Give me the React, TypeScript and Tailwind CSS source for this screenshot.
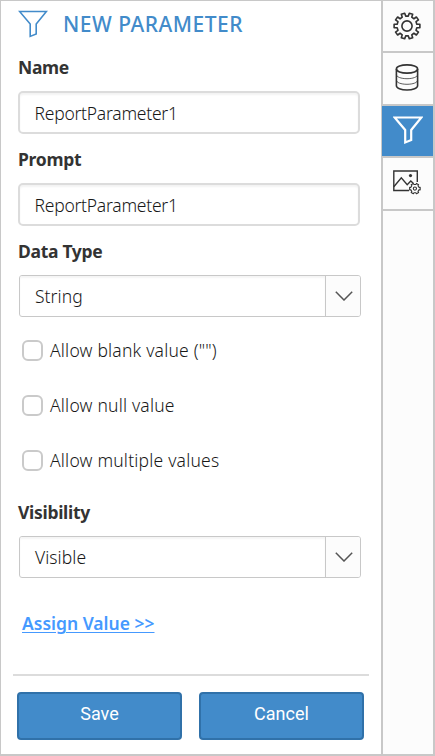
import React from "react";

const textFont = "font-['Noto_Sans','Open_Sans',sans-serif]";

function Funnel({ className, stroke }: { className: string; stroke: number }) {
  return (
    <svg className={className} width="30" height="28" viewBox="0 0 30 28" fill="none" stroke="currentColor" strokeWidth={stroke}>
      <path d="M1.6 1.5H28.4L18.2 14V24L12.2 26.4V14Z" />
    </svg>
  );
}

function gearPath(c: number, teeth: number, outer: number, inner: number) {
  const step = (Math.PI * 2) / teeth;
  const at = (r: number, a: number) => `${(c + r * Math.sin(a)).toFixed(2)} ${(c - r * Math.cos(a)).toFixed(2)}`;
  let d = "";
  for (let i = 0; i < teeth; i++) {
    const a = (i + 0.5) * step;
    d += `${i ? "L" : "M"}${at(inner, a - step * 0.29)}L${at(outer, a - step * 0.22)}L${at(outer, a + step * 0.22)}L${at(inner, a + step * 0.29)}`;
  }
  return d + "Z";
}

function Gear() {
  return (
    <svg width="28" height="28" viewBox="0 0 28 28" fill="none" stroke="#333" strokeWidth="1.6" strokeLinejoin="round">
      <path d={gearPath(14, 10, 13, 10)} />
      <circle cx="14" cy="14" r="5.1" />
    </svg>
  );
}

function Database() {
  return (
    <svg width="24" height="27" viewBox="0 0 24 27" fill="none" stroke="#333" strokeWidth="1.6">
      <ellipse cx="12" cy="5" rx="10.6" ry="4.1" />
      <path d="M1.4 5V21.8C1.4 24.1 6 26 12 26S22.6 24.1 22.6 21.8V5" />
      <path strokeWidth="0.8" d="M1.4 10.6C1.4 12.9 6 14.7 12 14.7S22.6 12.9 22.6 10.6M1.4 16.2C1.4 18.5 6 20.3 12 20.3S22.6 18.5 22.6 16.2" />
    </svg>
  );
}

function ImageSettings() {
  return (
    <svg width="28" height="25" viewBox="0 0 28 25" fill="none" stroke="#333" strokeWidth="1.4">
      <path d="M16 20.5H.8V1H24.3V12" />
      <path d="M.8 16.8L8.3 7.8L14.2 14.8L17.8 11L20.2 13.2" />
      <circle cx="17.5" cy="5.6" r="1.6" fill="#333" stroke="none" />
      <g transform="translate(16.2 12.9)" strokeWidth="1.1" strokeLinejoin="round">
        <path d={gearPath(5.7, 6, 5.4, 4.2)} />
        <circle cx="5.7" cy="5.7" r="1.6" />
      </g>
    </svg>
  );
}

function Label({ children, className }: { children: string; className: string }) {
  return <div className={`h-[24px] pl-[17px] text-[17.5px] leading-[22px] font-bold tracking-[-0.3px] whitespace-nowrap text-[#333] ${className}`}>{children}</div>;
}

function Field({ value, className }: { value: string; className: string }) {
  return (
    <div className={`ml-[17px] flex h-[43px] w-[342px] items-center rounded-[5px] border-2 border-[#dcdcdc] pl-[14.5px] shadow-[inset_0_2px_2px_#f3f3f3] ${className}`}>
      <span className="text-[17.5px] leading-[24px] font-light tracking-[-0.25px] text-[#181818]">{value}</span>
    </div>
  );
}

function Select({ value, className }: { value: string; className: string }) {
  return (
    <div className={`ml-[18px] flex h-[42px] w-[342px] overflow-hidden rounded-[3px] border border-[#c8c8c8] ${className}`}>
      <div className="flex w-[305px] items-center pl-[15px] shadow-[inset_0_2px_2px_#f5f5f5]">
        <span className="text-[17.5px] leading-[24px] font-light tracking-[0.05px] text-[#181818]">{value}</span>
      </div>
      <div className="flex flex-1 items-center justify-center border-l border-[#c8c8c8] bg-[#fcfcfc] pl-[2px]">
        <svg width="18" height="10" viewBox="0 0 18 10" fill="none" stroke="#555" strokeWidth="1.5">
          <path d="M.8 .8L9 9L17.2 .8" />
        </svg>
      </div>
    </div>
  );
}

function Check({ label, className }: { label: string; className: string }) {
  return (
    <div className={`ml-[21px] flex h-[21px] items-center ${className}`}>
      <div className="h-[21px] w-[21px] rounded-[6px] border-2 border-[#cacaca]" />
      <span className="ml-[7px] text-[17.5px] leading-[21px] font-light tracking-[0.2px] whitespace-nowrap text-[#181818]">{label}</span>
    </div>
  );
}

export default function App() {
  return (
    <div className={`flex h-[756px] w-[435px] border-t border-l border-b-2 border-[#c8c8c8] bg-white text-[#333] ${textFont}`}>
      <main className="w-[380px] shrink-0">
        <header className="flex h-[55px] text-[#428bca]">
          <Funnel className="mt-[9px] ml-[16.5px] shrink-0" stroke={1.6} />
          <h1 className="mt-[8px] ml-[15.5px] text-[21px] leading-[31px] font-medium tracking-[0.5px] whitespace-nowrap">NEW PARAMETER</h1>
        </header>
        <Label className="">Name</Label>
        <Field className="mt-[11px]" value="ReportParameter1" />
        <Label className="mt-[14px]">Prompt</Label>
        <Field className="mt-[11px]" value="ReportParameter1" />
        <Label className="mt-[14px]">Data Type</Label>
        <Select className="mt-[11px]" value="String" />
        <Check className="mt-[23px]" label={'Allow blank value ("")'} />
        <Check className="mt-[34px]" label="Allow null value" />
        <Check className="mt-[34px]" label="Allow multiple values" />
        <Label className="mt-[30px]">Visibility</Label>
        <Select className="mt-[11px]" value="Visible" />
        <a className="mt-[33px] ml-[21px] block h-[24px] w-max text-[17.5px] leading-[24px] font-semibold whitespace-nowrap text-[#4599ff] underline decoration-1 underline-offset-[2px]">Assign Value &gt;&gt;</a>
        <hr className="mt-[39px] ml-[12px] h-[2px] w-[356px] border-0 bg-[#dcdcdc]" />
        <div className="mt-[16px] ml-[16px] flex gap-[17px] font-[Roboto,sans-serif]">
          <button className="h-[48px] w-[165px] rounded-[4px] border-2 border-[#3071a9] bg-[#428bca] pb-[6px] text-[18px] text-white">Save</button>
          <button className="h-[48px] w-[165px] rounded-[4px] border-2 border-[#3071a9] bg-[#428bca] pb-[6px] text-[18px] text-white">Cancel</button>
        </div>
      </main>
      <aside className="w-[54px] shrink-0 border-x-2 border-[#c8c8c8] bg-[#fcfcfc]">
        <div className="flex h-[52px] items-center justify-center border-b-2 border-[#c8c8c8] pr-[2px] pb-px"><Gear /></div>
        <div className="flex h-[53px] items-center justify-center border-b-2 border-[#c8c8c8] pr-[2px] pb-[3px]"><Database /></div>
        <div className="-ml-px flex h-[52px] w-[51px] border-b-2 border-[#c8c8c8] bg-[#428bca] text-white">
          <Funnel className="mt-[10px] ml-[11px]" stroke={2.2} />
        </div>
        <div className="flex h-[53px] border-b-2 border-[#c8c8c8] pt-[12px] pl-[10px]"><ImageSettings /></div>
      </aside>
    </div>
  );
}
